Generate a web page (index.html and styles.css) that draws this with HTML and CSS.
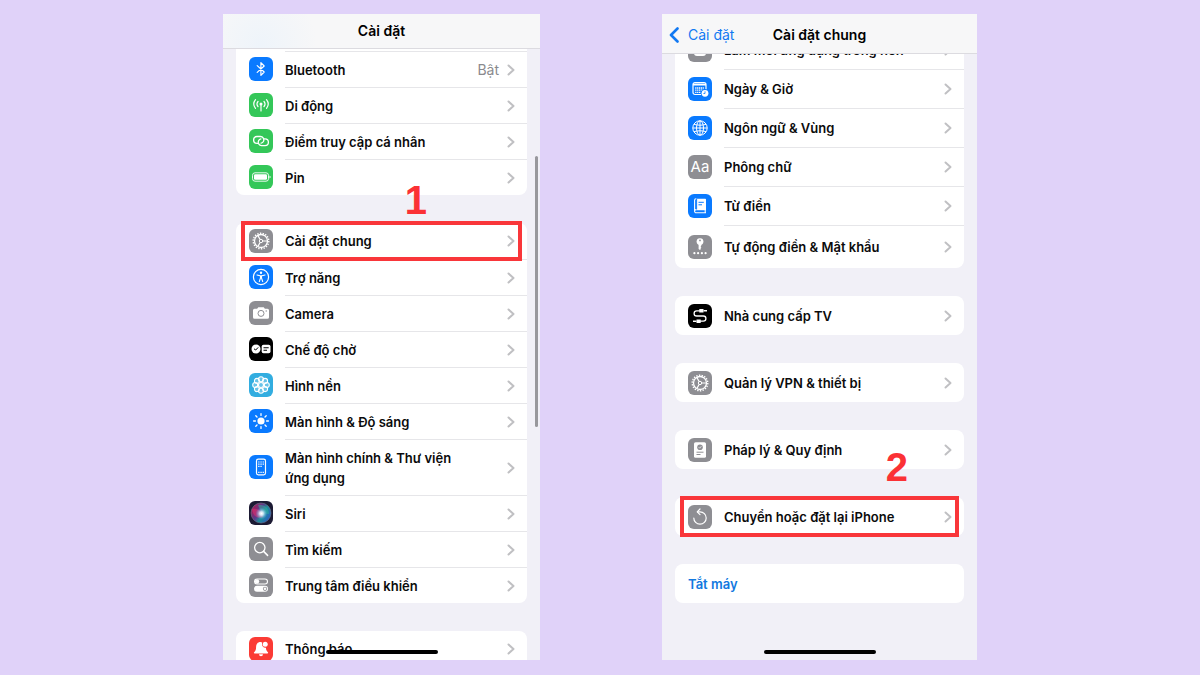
FILE: index.html
```html
<!DOCTYPE html>
<html lang="vi">
<head>
  <meta charset="UTF-8">
  <meta name="viewport" content="width=device-width, initial-scale=1.0">
  <title>Cài đặt</title>
  <link rel="stylesheet" href="styles.css">
</head>
<body>
  <!-- Shared icons -->
  <svg class="defs" aria-hidden="true">
    <symbol id="chevron" viewBox="0 0 8 12">
      <path d="M1.5 1.5 6.5 6l-5 4.5" fill="none" stroke="currentColor" stroke-width="2" stroke-linecap="round" stroke-linejoin="round"/>
    </symbol>
    <symbol id="gear" viewBox="0 0 24 24">
      <g fill="none" stroke="#fff">
        <circle cx="12" cy="12" r="6.5" stroke-width="1.3"/>
        <circle cx="12" cy="12" r="7.8" stroke-width="1.4" stroke-dasharray="1.4 1.323"/>
        <circle cx="12" cy="12" r="1.7" stroke-width="1"/>
        <path d="M13.7 12h5M11.1 10.5 8.8 6.4M11.1 13.5l-2.3 4.1" stroke-width="1.2"/>
      </g>
    </symbol>
  </svg>

  <main class="steps">
    <section class="phone">
      <header class="navbar">
        <h1 class="title">Cài đặt</h1>
      </header>

      <div class="content">
        <ul class="group group-cut">
          <li>
            <a class="row" href="#">
              <svg class="icon blue" viewBox="0 0 24 24"><path d="M8.2 8.6l7 6.4-3.3 3.3V5.7L15.2 9l-7 6.4" fill="none" stroke="#fff" stroke-width="1.2" stroke-linejoin="round" stroke-linecap="round"/></svg>
              <span class="body"><span class="label">Bluetooth</span><span class="value">Bật</span><svg class="chevron"><use href="#chevron"/></svg></span>
            </a>
          </li>
          <li>
            <a class="row" href="#">
              <svg class="icon green" viewBox="0 0 24 24">
                <path d="M12 11v7M9 8.500a3.900 3.900 0 0 0 0 5M15 8.500a3.900 3.900 0 0 1 0 5M6.500 6.700a6.800 6.800 0 0 0 0 8.600M17.500 6.700a6.800 6.800 0 0 1 0 8.600" fill="none" stroke="#fff" stroke-width="1.2" stroke-linecap="round"/>
                <circle cx="12" cy="11" r="1.5" fill="#fff"/>
              </svg>
              <span class="body"><span class="label">Di động</span><svg class="chevron"><use href="#chevron"/></svg></span>
            </a>
          </li>
          <li>
            <a class="row" href="#">
              <svg class="icon green" viewBox="0 0 24 24">
                <g fill="none" stroke="#fff" stroke-width="1.3" stroke-linecap="round">
                  <path d="M9 14.300H8a3.400 3.400 0 0 1 0-6.800h3.400a3.400 3.400 0 0 1 3 5c-.5.900-1.300 1.500-2.300 1.700"/>
                  <path d="M15 9.800h1a3.400 3.400 0 0 1 0 6.800h-3.400a3.400 3.400 0 0 1-3-5c.5-.9 1.300-1.500 2.300-1.700"/>
                </g>
              </svg>
              <span class="body"><span class="label">Điểm truy cập cá nhân</span><svg class="chevron"><use href="#chevron"/></svg></span>
            </a>
          </li>
          <li>
            <a class="row" href="#">
              <svg class="icon green" viewBox="0 0 24 24">
                <rect x="3.500" y="7.800" width="16" height="8.400" rx="2.500" fill="none" stroke="#fff" stroke-width="0.900"/>
                <rect x="5" y="9.200" width="13" height="5.600" rx="1.300" fill="#fff"/>
                <path d="M20.500 10.500c1.400.5 1.400 2.500 0 3z" fill="#fff"/>
              </svg>
              <span class="body"><span class="label">Pin</span><svg class="chevron"><use href="#chevron"/></svg></span>
            </a>
          </li>
        </ul>

        <ul class="group">
          <li>
            <a class="row marked" href="#">
              <svg class="icon gray" viewBox="0 0 24 24"><use href="#gear"/></svg>
              <span class="body"><span class="label">Cài đặt chung</span><svg class="chevron"><use href="#chevron"/></svg></span>
              <span class="step">1</span>
            </a>
          </li>
          <li>
            <a class="row" href="#">
              <svg class="icon blue" viewBox="0 0 24 24">
                <circle cx="12" cy="12" r="7.600" fill="none" stroke="#fff" stroke-width="1.200"/>
                <circle cx="12" cy="7.800" r="1.200" fill="#fff"/>
                <path d="M8 10l3 .8h2l3-.8M10.300 16.500l1.200-3.500h1l1.200 3.500M11.500 10.800v2.500M12.500 10.800v2.500" fill="none" stroke="#fff" stroke-width="1.100" stroke-linecap="round"/>
              </svg>
              <span class="body"><span class="label">Trợ năng</span><svg class="chevron"><use href="#chevron"/></svg></span>
            </a>
          </li>
          <li>
            <a class="row" href="#">
              <svg class="icon gray" viewBox="0 0 24 24">
                <path d="M5.500 7.800h2.600l1.200-1.600h5.400l1.200 1.600h2.600a1.500 1.500 0 0 1 1.500 1.500v6.900a1.500 1.500 0 0 1-1.500 1.500h-13A1.500 1.500 0 0 1 4 16.200V9.300a1.500 1.500 0 0 1 1.500-1.500z" fill="#fff"/>
                <circle cx="12" cy="12.400" r="3" fill="none" stroke="#8e8e93" stroke-width="1"/>
                <circle cx="17.200" cy="10" r="0.700" fill="#8e8e93"/>
              </svg>
              <span class="body"><span class="label">Camera</span><svg class="chevron"><use href="#chevron"/></svg></span>
            </a>
          </li>
          <li>
            <a class="row" href="#">
              <svg class="icon black" viewBox="0 0 24 24">
                <circle cx="7" cy="12" r="4.500" fill="#fff"/>
                <path d="M5 11.800l1.700 1.200 2.500-2.600" fill="none" stroke="#000" stroke-width="1"/>
                <rect x="12.700" y="7.800" width="8.800" height="8.400" rx="1.800" fill="#fff"/>
                <path d="M14.500 10.700h5.200M14.500 13.200h3.500" stroke="#000" stroke-width="1.100"/>
              </svg>
              <span class="body"><span class="label">Chế độ chờ</span><svg class="chevron"><use href="#chevron"/></svg></span>
            </a>
          </li>
          <li>
            <a class="row" href="#">
              <svg class="icon cyan" viewBox="0 0 24 24">
                <g fill="#ffffff44" stroke="#fff" stroke-width="1.1">
                  <circle cx="12" cy="6.200" r="2.500"/>
                  <circle cx="16.100" cy="7.900" r="2.500"/>
                  <circle cx="17.800" cy="12" r="2.500"/>
                  <circle cx="16.100" cy="16.100" r="2.500"/>
                  <circle cx="12" cy="17.800" r="2.500"/>
                  <circle cx="7.900" cy="16.100" r="2.500"/>
                  <circle cx="6.200" cy="12" r="2.500"/>
                  <circle cx="7.900" cy="7.900" r="2.500"/>
                  <circle cx="12" cy="12" r="2.500"/>
                </g>
              </svg>
              <span class="body"><span class="label">Hình nền</span><svg class="chevron"><use href="#chevron"/></svg></span>
            </a>
          </li>
          <li>
            <a class="row" href="#">
              <svg class="icon blue" viewBox="0 0 24 24">
                <circle cx="12" cy="12" r="3.600" fill="#fff"/>
                <path d="M12 4.600v1.800M12 17.600v1.800M4.600 12h1.800M17.600 12h1.800M6.800 6.800l1.200 1.200M16 16l1.200 1.200M6.800 17.200L8 16M16 8l1.200-1.200" stroke="#fff" stroke-width="1.300" stroke-linecap="round"/>
              </svg>
              <span class="body"><span class="label">Màn hình &amp; Độ sáng</span><svg class="chevron"><use href="#chevron"/></svg></span>
            </a>
          </li>
          <li>
            <a class="row row-tall" href="#">
              <svg class="icon blue" viewBox="0 0 24 24">
                <rect x="7.500" y="4.200" width="9" height="15.600" rx="1.800" fill="none" stroke="#fff" stroke-width="1.200"/>
                <path d="M9.200 7h1.300M11.400 7h1.300M13.600 7h1.300M9.200 9.200h1.300M11.400 9.200h1.300M13.600 9.200h1.300M9.200 11.400h1.300M11.400 11.400h1.300M9.200 17.300h1.300M11.400 17.300h1.300M13.600 17.300h1.300" stroke="#fff" stroke-width="1.200"/>
              </svg>
              <span class="body"><span class="label">Màn hình chính &amp; Thư viện ứng dụng</span><svg class="chevron"><use href="#chevron"/></svg></span>
            </a>
          </li>
          <li>
            <a class="row" href="#">
              <svg class="icon siri" viewBox="0 0 24 24">
                <defs>
                  <radialGradient id="siri-glow">
                    <stop offset="0" stop-color="#fff"/>
                    <stop offset="0.300" stop-color="#e5f4ff" stop-opacity="0.900"/>
                    <stop offset="1" stop-color="#4aa8e8" stop-opacity="0"/>
                  </radialGradient>
                  <linearGradient id="siri-orb" x1="0" y1="0.200" x2="1" y2="0.800">
                    <stop offset="0" stop-color="#b3174f"/>
                    <stop offset="0.400" stop-color="#5b3a8c"/>
                    <stop offset="0.600" stop-color="#1f8f9a"/>
                    <stop offset="1" stop-color="#2c55c8"/>
                  </linearGradient>
                </defs>
                <circle cx="12" cy="12" r="10" fill="url(#siri-orb)" stroke="#6f7790" stroke-width="0.600"/>
                <path d="M3 8c5-1 9 1 11 8-6 2-10-1-11-8z" fill="#e0306f" opacity="0.600"/>
                <path d="M9 4c7-1 11 4 11 9-5 0-9-3-11-9z" fill="#2fb59d" opacity="0.500"/>
                <circle cx="12.500" cy="12.500" r="6" fill="url(#siri-glow)"/>
              </svg>
              <span class="body"><span class="label">Siri</span><svg class="chevron"><use href="#chevron"/></svg></span>
            </a>
          </li>
          <li>
            <a class="row" href="#">
              <svg class="icon gray" viewBox="0 0 24 24">
                <circle cx="10.800" cy="10.600" r="5.200" fill="none" stroke="#fff" stroke-width="1.300"/>
                <path d="M14.600 14.400l4 4" stroke="#fff" stroke-width="1.500" stroke-linecap="round"/>
              </svg>
              <span class="body"><span class="label">Tìm kiếm</span><svg class="chevron"><use href="#chevron"/></svg></span>
            </a>
          </li>
          <li>
            <a class="row" href="#">
              <svg class="icon gray" viewBox="0 0 24 24">
                <rect x="5.500" y="6" width="13" height="5" rx="2.500" fill="none" stroke="#fff" stroke-width="1.100"/>
                <circle cx="8" cy="8.500" r="2.200" fill="#fff"/>
                <rect x="5" y="12.800" width="14" height="6" rx="3" fill="#fff"/>
                <circle cx="16" cy="15.800" r="2.100" fill="#8e8e93"/>
                <circle cx="16" cy="15.800" r="1.300" fill="#fff"/>
              </svg>
              <span class="body"><span class="label">Trung tâm điều khiển</span><svg class="chevron"><use href="#chevron"/></svg></span>
            </a>
          </li>
        </ul>

        <ul class="group">
          <li>
            <a class="row" href="#">
              <svg class="icon red" viewBox="0 0 24 24">
                <path d="M11.500 5c-3 0-4.300 2.200-4.400 5-.1 3-.6 3.800-2 5.200-.5.600-.2 1.300.6 1.300h12.600c.8 0 1.100-.7.600-1.300-1.300-1.300-1.800-2.200-2-4.400a3.700 3.700 0 0 1-3.600-5.200A5 5 0 0 0 11.500 5zM10 17.300h4a2 2 0 0 1-4 0z" fill="#fff"/>
                <circle cx="16.200" cy="7.200" r="2.500" fill="#fff"/>
              </svg>
              <span class="body"><span class="label">Thông báo</span><svg class="chevron"><use href="#chevron"/></svg></span>
            </a>
          </li>
        </ul>
      </div>

      <div class="scrollbar"></div>
      <div class="home-indicator"></div>
    </section>

    <section class="phone phone-general">
      <header class="navbar">
        <a class="back" href="#">
          <svg viewBox="0 0 10 16"><path d="M8.500 1.500 2 8l6.500 6.500" fill="none" stroke="currentColor" stroke-width="2.600" stroke-linecap="round" stroke-linejoin="round"/></svg>
          Cài đặt
        </a>
        <h2 class="title">Cài đặt chung</h2>
      </header>

      <div class="content">
        <ul class="group">
          <li>
            <a class="row" href="#">
              <svg class="icon gray" viewBox="0 0 24 24">
                <rect x="6" y="6" width="12" height="12" rx="3" fill="#fff"/>
                <circle cx="12" cy="12.500" r="3" fill="none" stroke="#8e8e93" stroke-width="1"/>
              </svg>
              <span class="body"><span class="label">Làm mới ứng dụng trong nền</span><svg class="chevron"><use href="#chevron"/></svg></span>
            </a>
          </li>
          <li>
            <a class="row" href="#">
              <svg class="icon blue" viewBox="0 0 24 24">
                <rect x="5" y="5.500" width="13" height="12" rx="2" fill="none" stroke="#fff" stroke-width="1.200"/>
                <path d="M5 7.500h13" stroke="#fff" stroke-width="2.200"/>
                <path d="M7.200 11h8.600M7.200 13.200h8.600M7.200 15.400h6" stroke="#fff" stroke-width="1.300" stroke-dasharray="1.300 0.600"/>
                <circle cx="17" cy="16.300" r="4.200" fill="#0a7aff"/>
                <circle cx="17" cy="16.300" r="3.400" fill="#fff"/>
                <path d="M17 14.300v2.200h-1.600" fill="none" stroke="#0a7aff" stroke-width="0.800"/>
              </svg>
              <span class="body"><span class="label">Ngày &amp; Giờ</span><svg class="chevron"><use href="#chevron"/></svg></span>
            </a>
          </li>
          <li>
            <a class="row" href="#">
              <svg class="icon blue" viewBox="0 0 24 24">
                <g fill="none" stroke="#fff" stroke-width="1">
                  <circle cx="12" cy="12" r="7.200"/>
                  <ellipse cx="12" cy="12" rx="3.500" ry="7.200"/>
                  <path d="M12 4.800v14.400M4.800 12h14.400M6 8.300c3.500 1.200 8.500 1.200 12 0M6 15.700c3.500-1.200 8.500-1.200 12 0"/>
                </g>
              </svg>
              <span class="body"><span class="label">Ngôn ngữ &amp; Vùng</span><svg class="chevron"><use href="#chevron"/></svg></span>
            </a>
          </li>
          <li>
            <a class="row" href="#">
              <span class="icon gray icon-text" aria-hidden="true">Aa</span>
              <span class="body"><span class="label">Phông chữ</span><svg class="chevron"><use href="#chevron"/></svg></span>
            </a>
          </li>
          <li>
            <a class="row" href="#">
              <svg class="icon blue" viewBox="0 0 24 24">
                <path d="M8 4.800h9.200a.8.800 0 0 1 .8.800v10.200H8z" fill="#fff"/>
                <path d="M6.600 17V6.300a1.500 1.500 0 0 1 1.400-1.500M18 18.800H8.200a1.600 1.600 0 0 1 0-3.200H18M17.200 15.600v3" fill="none" stroke="#fff" stroke-width="1.100"/>
                <path d="M8.600 5v10.500M10.500 8.300h5.300M10.500 10.800h3.500" stroke="#0a7aff" stroke-width="1"/>
              </svg>
              <span class="body"><span class="label">Từ điển</span><svg class="chevron"><use href="#chevron"/></svg></span>
            </a>
          </li>
          <li>
            <a class="row row-last" href="#">
              <svg class="icon gray" viewBox="0 0 24 24">
                <circle cx="12" cy="6.600" r="3.400" fill="#fff"/>
                <path d="M10.600 9h2.800v1.500l-.8.800.8.900-.8.900.3 1-.9 1-1.400-1.100z" fill="#fff"/>
                <circle cx="12" cy="5.400" r="0.900" fill="#8e8e93"/>
                <path d="M6.400 18.200h.01M10.100 18.200h.01M13.900 18.200h.01M17.600 18.200h.01" stroke="#fff" stroke-width="2.200" stroke-linecap="round"/>
              </svg>
              <span class="body"><span class="label">Tự động điền &amp; Mật khẩu</span><svg class="chevron"><use href="#chevron"/></svg></span>
            </a>
          </li>
        </ul>

        <ul class="group">
          <li>
            <a class="row" href="#">
              <svg class="icon black" viewBox="0 0 24 24">
                <path d="M12 6.800H8.700a2.600 2.600 0 0 0 0 5.200h6.600a2.600 2.600 0 0 1 0 5.200H12" fill="none" stroke="#fff" stroke-width="1.300"/>
                <path d="M11.300 5h4.200v3.600h-4.200zM8.500 15.400h4.200V19H8.500z" fill="#fff"/>
                <path d="M15.500 6.800h3.500M8.500 17.200H5" stroke="#fff" stroke-width="1.600"/>
              </svg>
              <span class="body"><span class="label">Nhà cung cấp TV</span><svg class="chevron"><use href="#chevron"/></svg></span>
            </a>
          </li>
        </ul>

        <ul class="group">
          <li>
            <a class="row" href="#">
              <svg class="icon gray" viewBox="0 0 24 24"><use href="#gear"/></svg>
              <span class="body"><span class="label">Quản lý VPN &amp; thiết bị</span><svg class="chevron"><use href="#chevron"/></svg></span>
            </a>
          </li>
        </ul>

        <ul class="group">
          <li>
            <a class="row" href="#">
              <svg class="icon gray" viewBox="0 0 24 24">
                <rect x="6" y="4.200" width="12" height="15.600" rx="1.600" fill="#fff"/>
                <circle cx="12" cy="9.200" r="2.800" fill="#8e8e93"/>
                <path d="M10.700 9.200l1 1 1.700-2" fill="none" stroke="#fff" stroke-width="0.700"/>
                <path d="M8.500 14.200h7M8.500 16.500h4" stroke="#8e8e93" stroke-width="1"/>
              </svg>
              <span class="body"><span class="label">Pháp lý &amp; Quy định</span><svg class="chevron"><use href="#chevron"/></svg></span>
            </a>
          </li>
        </ul>

        <ul class="group">
          <li>
            <a class="row marked" href="#">
              <svg class="icon gray" viewBox="0 0 24 24">
                <path d="M5.800 13a6.200 6.200 0 1 0 6.200-6.200H9.500" fill="none" stroke="#fff" stroke-width="1.200" stroke-linecap="round"/>
                <path d="M12 4 9.200 6.800 12 9.600" fill="none" stroke="#fff" stroke-width="1.200" stroke-linecap="round" stroke-linejoin="round"/>
              </svg>
              <span class="body"><span class="label">Chuyển hoặc đặt lại iPhone</span><svg class="chevron"><use href="#chevron"/></svg></span>
              <span class="step">2</span>
            </a>
          </li>
        </ul>

        <div class="group">
          <button class="row shutdown" type="button">Tắt máy</button>
        </div>
      </div>

      <div class="home-indicator"></div>
    </section>
  </main>
</body>
</html>
```

FILE: styles.css
```css
* {
  box-sizing: border-box;
}

body {
  margin: 0;
  background: #e0d2f9;
  color: #0b0b0c;
  font-family: Inter, "Liberation Sans", sans-serif;
  font-size: 13px;
  font-weight: 600;
  line-height: 20px;
}

a {
  color: inherit;
  text-decoration: none;
}

.defs {
  position: absolute;
  width: 0;
  height: 0;
}

.steps {
  display: grid;
  grid-template-columns: 317fr 315fr;
  gap: 122px;
  max-width: 754px;
  height: 100vh;
  margin: 0 auto;
  padding: 14px 0 15px;
}

.phone {
  position: relative;
  display: flex;
  flex-direction: column;
  min-height: 0;
  overflow: hidden;
  background: #f1f0f7;
}

/* Navigation bar */
.navbar {
  position: relative;
  z-index: 2;
  display: grid;
  grid-template-columns: 1fr auto 1fr;
  align-items: center;
  flex: none;
  height: 35px;
  padding: 0 7px;
  border-bottom: 1px solid #dcdbe0;
  background: radial-gradient(circle at 12% 90%, #eef4fa, #f7f7f8 20%);
}

.title {
  grid-column: 2;
  margin: 0;
  color: #000;
  font-size: 14px;
  font-weight: 600;
}

.back {
  display: flex;
  align-items: center;
  gap: 9px;
  color: #1279f2;
  font-size: 14px;
  font-weight: 400;
}

.back svg {
  width: 10px;
  height: 16px;
}

/* Grouped lists */
.content {
  display: flex;
  flex-direction: column;
  gap: 28px;
  padding: 0 13px;
}

.group {
  flex: none;
  margin: 0;
  padding: 0;
  list-style: none;
  border-radius: 8px;
  background: #fff;
}

.group-cut {
  padding-top: 2px;
  border-radius: 0 0 8px 8px;
}

.row {
  position: relative;
  display: flex;
  align-items: center;
  gap: 12px;
  height: 36px;
  padding-left: 13px;
}

.row-tall {
  height: 56px;
}

.icon {
  flex: none;
  width: 24px;
  height: 24px;
  border-radius: 6px;
}

.icon-text {
  color: #fff;
  font-size: 15px;
  font-weight: 400;
  line-height: 24px;
  text-align: center;
}

.blue { background: #0a7aff; }
.green { background: #34c759; }
.gray { background: #8e8e93; }
.black { background: #000; }
.cyan { background: #32ade0; }
.red { background: #fb3b35; }
.siri { background: #1c1a33; }

.body {
  display: flex;
  align-items: center;
  flex: 1;
  gap: 8px;
  height: 100%;
  padding-right: 12px;
}

li + li .body,
.group-cut .body {
  border-top: 1px solid #e6e6e9;
}

.label {
  flex: 1;
}

.row-tall .label {
  padding-right: 32px;
}

.value {
  color: #8a8a8e;
  font-size: 14px;
  font-weight: 400;
}

.chevron {
  width: 8px;
  height: 12px;
  color: #c0c0c3;
}

/* Highlighted step */
.marked {
  z-index: 1;
}

.marked::after {
  content: "";
  position: absolute;
  inset: -2px 5px;
  border: 4px solid #f9363a;
}

.step {
  position: absolute;
  right: 100px;
  bottom: 36px;
  color: #fb3135;
  font: bold 40px/46px "Liberation Sans", Arial, sans-serif;
}

/* General settings screen */
.phone-general .navbar {
  height: 40px;
  padding-top: 2px;
  background: #f7f7f8;
}

.phone-general .content {
  margin-top: -24px;
}

.phone-general .row {
  height: 39px;
}

.phone-general .row-last {
  height: 43px;
}

.phone-general .marked::after {
  inset: -1px 5px;
}

.phone-general .step {
  right: 56px;
  bottom: 46px;
}

.shutdown {
  width: 100%;
  border: 0;
  background: none;
  color: #1279e0;
  font: inherit;
  cursor: pointer;
}

.scrollbar {
  position: absolute;
  top: 22%;
  right: 2px;
  width: 3px;
  height: 42%;
  border-radius: 2px;
  background: #98989c;
}

.home-indicator {
  position: absolute;
  bottom: 6px;
  left: 50%;
  width: 112px;
  height: 4px;
  margin-left: -56px;
  border-radius: 2px;
  background: #000;
}
```
